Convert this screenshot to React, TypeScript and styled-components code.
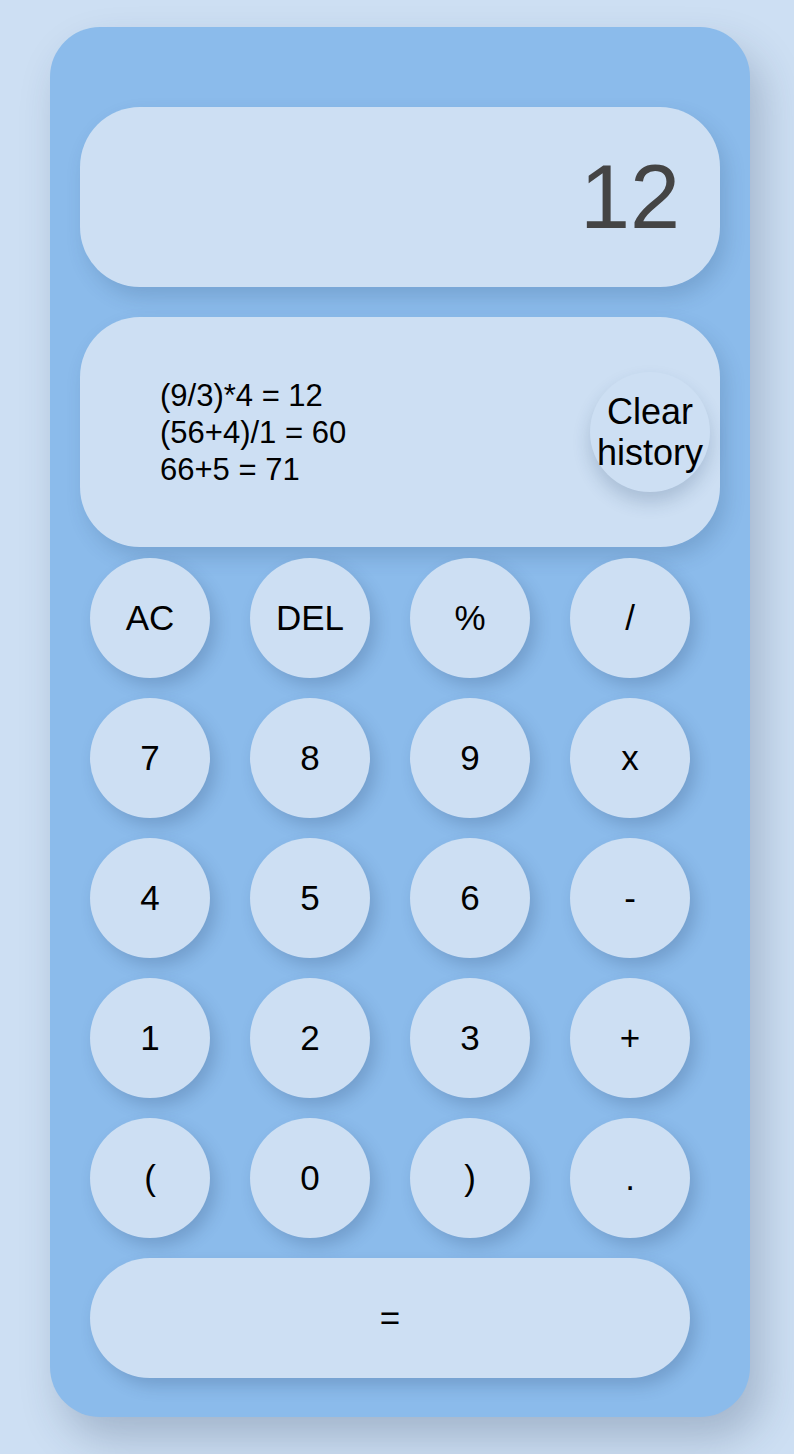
import React from "react";
import styled, { createGlobalStyle } from "styled-components";

const GlobalStyle = createGlobalStyle`
  body {
    margin: 0;
    background: #cddff3;
    font-family: "Liberation Sans", Arial, sans-serif;
  }
`;

const Page = styled.div`
  min-height: 100vh;
  padding: 27px 0 37px 50px;
  box-sizing: border-box;
`;

const Calculator = styled.div`
  box-sizing: border-box;
  width: 700px;
  height: 1390px;
  padding: 80px 30px 0;
  border-radius: 50px;
  background: #8bbbeb;
  box-shadow: 12px 22px 40px rgba(40, 60, 90, 0.25);
`;

const Panel = styled.div`
  box-sizing: border-box;
  border-radius: 60px;
  background: #cddff3;
  box-shadow: 6px 10px 20px rgba(30, 60, 100, 0.18);
`;

const Display = styled(Panel)`
  height: 180px;
  display: flex;
  align-items: center;
  justify-content: flex-end;
  padding-right: 40px;
  font-size: 90px;
  color: #444444;
`;

const History = styled(Panel)`
  height: 230px;
  margin-top: 30px;
  display: flex;
  align-items: center;
  justify-content: space-between;
  padding: 0 10px 0 80px;
`;

const HistoryList = styled.div`
  font-size: 31px;
  line-height: 37px;
  color: #000;
`;

const Keypad = styled.div`
  display: grid;
  grid-template-columns: repeat(4, 120px);
  column-gap: 40px;
  row-gap: 20px;
  margin-top: 11px;
  padding-left: 10px;
`;

const Key = styled.button<{ $wide?: boolean }>`
  grid-column: ${(p) => (p.$wide ? "1 / -1" : "auto")};
  height: 120px;
  border: none;
  border-radius: 60px;
  padding: 0;
  background: #cddff3;
  color: #000;
  font-family: "Liberation Sans", Arial, sans-serif;
  font-size: 35px;
  box-shadow: 6px 8px 16px rgba(30, 60, 100, 0.22);
  cursor: pointer;
`;

const ClearButton = styled(Key)`
  width: 120px;
  font-size: 36px;
  line-height: 41px;
  box-shadow: 0 10px 18px rgba(30, 60, 100, 0.2);
`;

const keys = [
  "AC", "DEL", "%", "/",
  "7", "8", "9", "x",
  "4", "5", "6", "-",
  "1", "2", "3", "+",
  "(", "0", ")", ".",
];

const history = ["(9/3)*4 = 12", "(56+4)/1 = 60", "66+5 = 71"];

export default function App() {
  return (
    <>
      <GlobalStyle />
      <Page>
        <Calculator>
          <Display>12</Display>
          <History>
            <HistoryList>
              {history.map((h) => (
                <div key={h}>{h}</div>
              ))}
            </HistoryList>
            <ClearButton>
              Clear
              <br />
              history
            </ClearButton>
          </History>
          <Keypad>
            {keys.map((k) => (
              <Key key={k}>{k}</Key>
            ))}
            <Key $wide>=</Key>
          </Keypad>
        </Calculator>
      </Page>
    </>
  );
}
